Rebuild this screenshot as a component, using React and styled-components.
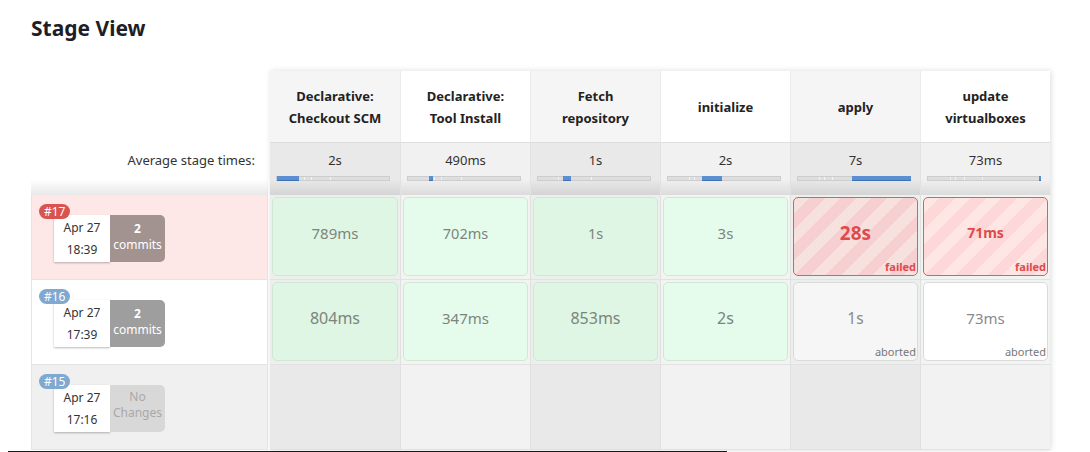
import React from 'react';
import styled, { createGlobalStyle, css } from 'styled-components';

const Global = createGlobalStyle`
  html, body { margin: 0; padding: 0; background: #fff; }
  body { font-family: "Noto Sans", "Open Sans", sans-serif; color: #333; }
`;

const Page = styled.div`
  width: 1090px;
  height: 452px;
  overflow: hidden;
  box-sizing: border-box;
  padding: 13px 0 0 31px;
`;

const Title = styled.h2`
  margin: 0 0 28px;
  font-size: 21px;
  line-height: 30px;
  font-weight: 700;
  color: #1e1e28;
`;

const Table = styled.div`
  display: flex;
  align-items: flex-start;
`;

const LeftCol = styled.div`
  width: 237px;
  margin-right: 2px;
  display: flex;
  flex-direction: column;
`;

const HeadSpacer = styled.div`
  height: 71px;
`;

const shadeBottom = css`
  background-image: linear-gradient(to bottom, rgba(0,0,0,0) 70%, rgba(0,0,0,0.09) 100%);
`;

const AvgLabel = styled.div`
  height: 53px;
  box-sizing: border-box;
  padding: 8px 13px 0 0;
  text-align: right;
  font-size: 13px;
  line-height: 20px;
  color: #333;
  ${shadeBottom};
`;

const runBg = { failed: '#fde8e7', aborted: '#ffffff', empty: '#f0f0f0' };

const RunCell = styled.div`
  position: relative;
  height: 85px;
  box-sizing: border-box;
  padding: 20px 0 0 22px;
  background: ${p => runBg[p.$status]};
  border: 1px solid #e4e4e4;
  border-top: none;
  display: flex;
  align-items: flex-start;
`;

const badgeBg = { failed: '#d9534f', aborted: '#7fa9d1', empty: '#7fa9d1' };

const Badge = styled.span`
  position: absolute;
  left: 7px;
  top: 9px;
  z-index: 1;
  min-width: 30px;
  height: 15px;
  box-sizing: border-box;
  padding: 0 5px;
  border-radius: 8px;
  background: ${p => badgeBg[p.$status]};
  color: #fff;
  font-size: 12px;
  line-height: 15px;
  text-align: center;
`;

const DateBox = styled.div`
  width: 56px;
  height: 47px;
  box-sizing: border-box;
  padding-top: 2px;
  background: #fff;
  box-shadow: 0 1px 2px rgba(0,0,0,0.28);
  display: flex;
  flex-direction: column;
  align-items: center;
  font-size: 12px;
  line-height: 22px;
  color: #333;
`;

const commitBg = { failed: '#a29390', aborted: '#9e9e9e', empty: '#d8d8d8' };

const CommitBox = styled.div`
  width: 55px;
  height: 47px;
  box-sizing: border-box;
  padding-top: ${p => (p.$none ? 4 : 6)}px;
  border-radius: 0 5px 5px 0;
  background: ${p => commitBg[p.$status]};
  color: ${p => (p.$none ? '#a8a8a8' : '#fff')};
  display: flex;
  flex-direction: column;
  align-items: center;
  font-size: 12px;
  line-height: 16px;
`;

const CommitCount = styled.span`
  font-weight: 700;
`;

const StageTable = styled.div`
  width: 780px;
  display: flex;
  flex-direction: column;
  box-shadow: 1px 0 6px rgba(0,0,0,0.14);
`;

const Row = styled.div`
  display: grid;
  grid-template-columns: repeat(6, 130px);
`;

const HeaderCell = styled.div`
  height: 71px;
  box-sizing: border-box;
  background: ${p => (p.$odd ? '#f5f5f5' : '#ffffff')};
  border-left: ${p => (p.$first ? 'none' : '1px solid #ebebeb')};
  display: flex;
  align-items: center;
  justify-content: center;
  text-align: center;
  font-size: 13px;
  line-height: 22px;
  font-weight: 700;
  color: #222;
`;

const AvgCell = styled.div`
  height: 53px;
  box-sizing: border-box;
  padding-top: 8px;
  background-color: ${p => (p.$odd ? '#e9e9e9' : '#f1f1f1')};
  border-top: 1px solid #dedede;
  border-left: ${p => (p.$first ? 'none' : '1px solid #e2e2e2')};
  ${shadeBottom};
  font-size: 13px;
  line-height: 19px;
  text-align: center;
  color: #333;
`;

const Bar = styled.div`
  position: relative;
  width: 114px;
  height: 5px;
  margin: 6px 0 0 6px;
  box-sizing: border-box;
  background: #dedede;
  border: 1px solid #cdcdcd;
`;

const Tick = styled.span`
  position: absolute;
  top: 0;
  bottom: 0;
  width: 1px;
  background: #f4f4f4;
`;

const Fill = styled.span`
  position: absolute;
  top: -1px;
  bottom: -1px;
  background: #5b8fd2;
  border-bottom: 1px solid #3f72b5;
`;

const BodyRow = styled(Row)`
  height: 85px;
`;

const cellBg = {
  stage: ['#ecf0ec', '#f1f4f1'],
  empty: ['#e9e9e9', '#f2f2f2'],
};

const StageCell = styled.div`
  box-sizing: border-box;
  padding: 2px 2px 3px;
  background: ${p => cellBg[p.$kind][p.$odd ? 0 : 1]};
  border-left: ${p => (p.$first ? 'none' : '1px solid #e0e0e0')};
  border-bottom: 1px solid #e2e2e2;
`;

const boxStyles = {
  success: odd => css`
    background: ${odd ? '#dff6e5' : '#e5fcec'};
    border: 1px solid #d3e6d6;
    color: #7b857c;
  `,
  failed: odd => css`
    background: repeating-linear-gradient(
      135deg,
      ${odd ? '#f6e1df' : '#fde6e3'} 0 11px,
      ${odd ? '#f6d0d1' : '#fdd8d8'} 11px 22px
    );
    border: 1.5px solid #e35b5d;
    color: #e04a4a;
  `,
  aborted: odd => css`
    background: ${odd ? '#f6f6f6' : '#ffffff'};
    border: 1px solid #dadada;
    color: #8a8a8a;
  `,
};

const StageBox = styled.div`
  height: 100%;
  box-sizing: border-box;
  border-radius: 5px;
  padding-top: 24px;
  display: flex;
  flex-direction: column;
  align-items: center;
  ${p => boxStyles[p.$status](p.$odd)};
`;

const Duration = styled.span`
  font-size: ${p => p.$size}px;
  line-height: 22px;
  font-weight: ${p => (p.$status === 'failed' ? 700 : 400)};
`;

const StatusLabel = styled.span`
  margin-top: auto;
  align-self: flex-end;
  padding: 0 1px 1px 0;
  font-size: 11px;
  line-height: 14px;
  font-weight: ${p => (p.$status === 'failed' ? 700 : 400)};
  color: ${p => (p.$status === 'failed' ? '#e04a4a' : '#777')};
`;

const BottomLine = styled.div`
  width: 719px;
  height: 1px;
  margin: 1px 0 0 -23px;
  background: #1a1a1a;
`;

const stages = [
  { name: ['Declarative:', 'Checkout SCM'], avg: '2s', fill: [0, 22], ticks: [27, 34, 53] },
  { name: ['Declarative:', 'Tool Install'], avg: '490ms', fill: [21, 4], ticks: [26, 33, 53] },
  { name: ['Fetch', 'repository'], avg: '1s', fill: [25, 8], ticks: [20, 53] },
  { name: ['initialize'], avg: '2s', fill: [34, 20], ticks: [21, 26] },
  { name: ['apply'], avg: '7s', fill: [54, 59], ticks: [21, 26, 34] },
  { name: ['update', 'virtualboxes'], avg: '73ms', fill: [111, 2], ticks: [22, 27, 36, 54] },
];

const runs = [
  {
    id: '#17', status: 'failed', date: 'Apr 27', time: '18:39', commits: 2,
    cells: [
      { s: 'success', d: '789ms', size: 15 },
      { s: 'success', d: '702ms', size: 14.5 },
      { s: 'success', d: '1s', size: 14.5 },
      { s: 'success', d: '3s', size: 15 },
      { s: 'failed', d: '28s', size: 19, label: 'failed' },
      { s: 'failed', d: '71ms', size: 14, label: 'failed' },
    ],
  },
  {
    id: '#16', status: 'aborted', date: 'Apr 27', time: '17:39', commits: 2,
    cells: [
      { s: 'success', d: '804ms', size: 16 },
      { s: 'success', d: '347ms', size: 15 },
      { s: 'success', d: '853ms', size: 16 },
      { s: 'success', d: '2s', size: 16 },
      { s: 'aborted', d: '1s', size: 15.5, label: 'aborted' },
      { s: 'aborted', d: '73ms', size: 15, label: 'aborted' },
    ],
  },
  { id: '#15', status: 'empty', date: 'Apr 27', time: '17:16', commits: 0, cells: null },
];

export default function App() {
  return (
    <Page>
      <Global />
      <Title>Stage View</Title>
      <Table>
        <LeftCol>
          <HeadSpacer />
          <AvgLabel>Average stage times:</AvgLabel>
          {runs.map(r => (
            <RunCell key={r.id} $status={r.status}>
              <Badge $status={r.status}>{r.id}</Badge>
              <DateBox>
                <span>{r.date}</span>
                <span>{r.time}</span>
              </DateBox>
              {r.commits ? (
                <CommitBox $status={r.status}>
                  <CommitCount>{r.commits}</CommitCount>
                  <span>commits</span>
                </CommitBox>
              ) : (
                <CommitBox $status={r.status} $none>
                  <span>No</span>
                  <span>Changes</span>
                </CommitBox>
              )}
            </RunCell>
          ))}
        </LeftCol>
        <StageTable>
          <Row>
            {stages.map((s, i) => (
              <HeaderCell key={i} $odd={i % 2 === 0} $first={i === 0}>
                <div>
                  {s.name.map((l, j) => (
                    <div key={j}>{l}</div>
                  ))}
                </div>
              </HeaderCell>
            ))}
          </Row>
          <Row>
            {stages.map((s, i) => (
              <AvgCell key={i} $odd={i % 2 === 0} $first={i === 0}>
                {s.avg}
                <Bar>
                  {s.ticks.map(t => (
                    <Tick key={t} style={{ left: t }} />
                  ))}
                  <Fill style={{ left: s.fill[0], width: s.fill[1] }} />
                </Bar>
              </AvgCell>
            ))}
          </Row>
          {runs.map(r => (
            <BodyRow key={r.id}>
              {stages.map((s, i) =>
                r.cells ? (
                  <StageCell key={i} $kind="stage" $odd={i % 2 === 0} $first={i === 0}>
                    <StageBox $status={r.cells[i].s} $odd={i % 2 === 0}>
                      <Duration $size={r.cells[i].size} $status={r.cells[i].s}>
                        {r.cells[i].d}
                      </Duration>
                      {r.cells[i].label && (
                        <StatusLabel $status={r.cells[i].s}>{r.cells[i].label}</StatusLabel>
                      )}
                    </StageBox>
                  </StageCell>
                ) : (
                  <StageCell key={i} $kind="empty" $odd={i % 2 === 0} $first={i === 0} />
                )
              )}
            </BodyRow>
          ))}
        </StageTable>
      </Table>
      <BottomLine />
    </Page>
  );
}
